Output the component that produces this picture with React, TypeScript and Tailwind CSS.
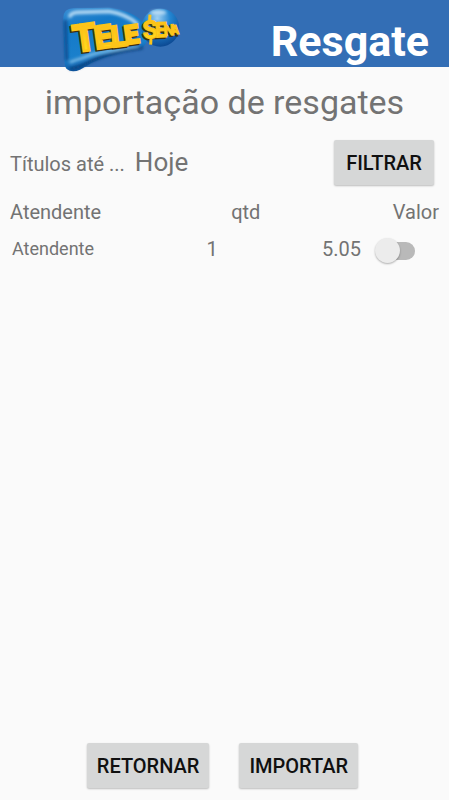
import { useState } from 'react';

type Resgate = {
    id: number;
    atendente: string;
    qtd: number;
    valor: number;
};

const resgates: Resgate[] = [
    { id: 1, atendente: 'Atendente', qtd: 1, valor: 5.05 },
];

// letras do logo: posição, tamanho, inclinação e contorno
const letters = [
    { char: 'T', x: 75, y: 157, size: 112, angle: -8, outline: 8 },
    { char: 'E', x: 138, y: 147, size: 94, angle: -8, outline: 8 },
    { char: 'L', x: 187, y: 141, size: 86, angle: -7, outline: 8 },
    { char: 'E', x: 227, y: 133, size: 76, angle: -8, outline: 8 },
    { char: 'S', x: 280, y: 116, size: 74, angle: -4, outline: 4 },
    { char: 'E', x: 316, y: 112, size: 62, angle: -2, outline: 4 },
    { char: 'N', x: 342, y: 107, size: 46, angle: -4, outline: 3 },
    { char: 'A', x: 363, y: 103, size: 36, angle: 0, outline: 3 },
];

const Logo = () => (
    <svg
        role="img"
        aria-label="Tele Sena"
        viewBox="0 0 420 240"
        className="h-20 w-[140px] shrink-0 font-['Roboto',sans-serif] font-bold"
    >
        <defs>
            <linearGradient id="panel" x1="0" y1="0" x2="0.3" y2="1">
                <stop offset="0" stopColor="#3b8fd4" />
                <stop offset="0.3" stopColor="#1479c8" />
                <stop offset="0.75" stopColor="#1a80cc" />
                <stop offset="1" stopColor="#0d4d96" />
            </linearGradient>
            <radialGradient id="ball" cx="0.42" cy="0.25" r="0.75">
                <stop offset="0" stopColor="#9fd0f2" />
                <stop offset="0.45" stopColor="#2386d2" />
                <stop offset="1" stopColor="#0c4a94" />
            </radialGradient>
            <linearGradient id="gold" x1="0" y1="0" x2="0" y2="1">
                <stop offset="0" stopColor="#fbb515" />
                <stop offset="1" stopColor="#fde820" />
            </linearGradient>
            <filter id="soft" x="-20%" y="-40%" width="140%" height="180%">
                <feGaussianBlur stdDeviation="4" />
            </filter>
        </defs>

        <path
            d="M40 54Q40 26 70 25L178 23Q248 32 278 66Q293 88 290 124Q286 144 258 150Q180 162 130 186L90 209Q66 220 50 207Q43 200 44 180Z"
            fill="url(#panel)"
        />
        <g filter="url(#soft)" fill="none" strokeLinecap="round">
            <path d="M60 48Q64 38 82 37L177 34Q228 42 260 70" stroke="#b5daf4" strokeWidth="11" />
            <path d="M46 64L50 178" stroke="#0b4a8c" strokeWidth="9" />
            <path d="M62 186Q72 182 98 174Q150 150 264 142" stroke="#7fbfea" strokeWidth="8" />
            <path d="M62 206Q88 204 122 184Q176 158 276 144" stroke="#073a75" strokeWidth="7" />
        </g>
        <circle cx="331" cy="83" r="57" fill="url(#ball)" />
        <ellipse cx="325" cy="38" rx="24" ry="7" fill="#b9dcf4" filter="url(#soft)" />

        {/* sombra */}
        {letters.map(({ char, x, y, size, angle, outline }) => (
            <text
                key={x}
                x={x - 4}
                y={y + 4}
                fontSize={size}
                transform={`rotate(${angle} ${x} ${y})`}
                fill="#3a3010"
                stroke="#3a3010"
                strokeWidth={outline}
            >
                {char}
            </text>
        ))}
        {letters.map(({ char, x, y, size, angle, outline }) => (
            <text
                key={x}
                x={x}
                y={y}
                fontSize={size}
                transform={`rotate(${angle} ${x} ${y})`}
                fill="url(#gold)"
                stroke="#fcc419"
                strokeWidth={outline}
            >
                {char}
            </text>
        ))}
        <path d="M300 44L299 60M303 116L302 134" stroke="#fcc419" strokeWidth="9" />
    </svg>
);

type ButtonProps = {
    children: string;
    onClick?: () => void;
};

const Button = ({ children, onClick }: ButtonProps) => (
    <button
        type="button"
        onClick={onClick}
        className="h-[45px] min-w-[100px] rounded-xs bg-[#d6d7d7] px-[10px] text-xl font-medium text-[#101010] shadow-[0_1px_2px_rgba(0,0,0,0.25)]"
    >
        {children}
    </button>
);

const App = () => {
    const [selected, setSelected] = useState<number[]>([]);

    const toggle = (id: number) => {
        setSelected((prev) =>
            prev.includes(id) ? prev.filter((item) => item !== id) : [...prev, id]
        );
    };

    return (
        <div className="flex min-h-screen flex-col bg-[#fafafa] font-['Roboto',sans-serif] text-[#737373]">
            <header className="flex h-[67px] items-start justify-between bg-[#336eb5] pr-5 pl-[50px]">
                <Logo />
                <h1 className="pt-4 text-[43px] leading-[50px] font-bold text-white">Resgate</h1>
            </header>

            <main className="flex grow flex-col">
                <h2 className="pt-3 text-center text-[34px] leading-[46px]">importação de resgates</h2>

                <div className="mt-[15px] flex items-center justify-between pr-[15px] pl-[10px]">
                    <p className="flex items-baseline gap-[10px]">
                        <span className="text-xl">Títulos até ...</span>
                        <span className="text-[26px]">Hoje</span>
                    </p>
                    <Button>FILTRAR</Button>
                </div>

                <table className="mt-2 w-full table-fixed text-xl">
                    <colgroup>
                        <col className="w-[46%]" />
                        <col className="w-[12%]" />
                        <col />
                        <col className="w-[88px]" />
                    </colgroup>
                    <thead>
                        <tr className="h-[37px]">
                            <th className="pl-[10px] text-left font-normal">Atendente</th>
                            <th className="text-right font-normal">qtd</th>
                            <th colSpan={2} className="pr-[10px] text-right font-normal">Valor</th>
                        </tr>
                    </thead>
                    <tbody>
                        {resgates.map((resgate) => (
                            <tr key={resgate.id} className="h-[37px]">
                                <td className="pl-3 text-lg">{resgate.atendente}</td>
                                <td>{resgate.qtd}</td>
                                <td className="text-right">{resgate.valor.toFixed(2)}</td>
                                <td className="pt-1 pl-[14px]">
                                    <label className="relative flex h-7 w-10 items-center">
                                        <input
                                            type="checkbox"
                                            role="switch"
                                            aria-label={`Selecionar ${resgate.atendente}`}
                                            checked={selected.includes(resgate.id)}
                                            onChange={() => toggle(resgate.id)}
                                            className="peer ml-1 h-[18px] w-9 appearance-none rounded-full bg-[#b9b9b9] checked:bg-[#8fb3dd]"
                                        />
                                        <span className="absolute left-0 size-[25px] rounded-full bg-[#ececec] shadow-[0_1px_2px_rgba(0,0,0,0.3)] peer-checked:left-4 peer-checked:bg-[#336eb5]" />
                                    </label>
                                </td>
                            </tr>
                        ))}
                    </tbody>
                </table>
            </main>

            <footer className="flex justify-center gap-[30px] pr-1 pb-3">
                <Button>RETORNAR</Button>
                <Button>IMPORTAR</Button>
            </footer>
        </div>
    );
};

export default App;
